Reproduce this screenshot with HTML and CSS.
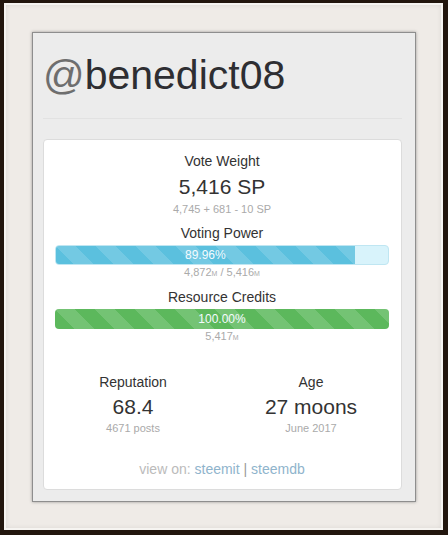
FILE: index.html
```html
<!DOCTYPE html>
<html lang="en">
<head>
  <meta charset="UTF-8" />
  <meta name="viewport" content="width=device-width, initial-scale=1.0" />
  <title>@benedict08</title>
  <link rel="stylesheet" href="styles.css">
</head>
<body>
  <div class="frame">
    <div class="panel">
      <h1><span class="at">@</span>benedict08</h1>
      <hr>
      <div class="card">
        <div class="label">Vote Weight</div>
        <div class="value">5,416 SP</div>
        <div class="sub">4,745 + 681 - 10 SP</div>

        <div class="label spaced">Voting Power</div>
        <div class="progress info">
          <div class="bar" style="width: 89.96%">89.96%</div>
        </div>
        <div class="sub">4,872<small>M</small> / 5,416<small>M</small></div>

        <div class="label spaced">Resource Credits</div>
        <div class="progress success">
          <div class="bar" style="width: 100%">100.00%</div>
        </div>
        <div class="sub">5,417<small>M</small></div>

        <div class="stats">
          <div class="stat">
            <div class="label">Reputation</div>
            <div class="value">68.4</div>
            <div class="sub">4671 posts</div>
          </div>
          <div class="stat">
            <div class="label">Age</div>
            <div class="value">27 moons</div>
            <div class="sub">June 2017</div>
          </div>
        </div>

        <div class="links">view on: <a href="#">steemit</a> <span class="sep">|</span> <a href="#">steemdb</a></div>
      </div>
    </div>
  </div>
</body>
</html>
```

FILE: styles.css
```css
html, body {
  margin: 0;
  height: 100%;
}
body {
  font-family: 'Liberation Sans', Arial, sans-serif;
  background-color: #22160e;
  color: #333;
  padding: 3px 5px 5px 4px;
  box-sizing: border-box;
}
.frame {
  height: 100%;
  box-sizing: border-box;
  background-color: #efebe7;
  padding: 29px 27px 28px 28px;
  box-shadow: inset 0 0 0 2px #f6f4f1, inset 0 0 6px rgba(0,0,0,0.15);
}
.panel {
  height: 100%;
  box-sizing: border-box;
  background-color: #ececec;
  border: 1px solid #8e8e8e;
  box-shadow: 0 0 3px rgba(0,0,0,0.35);
  padding: 19px 13px 12px 10px;
}
h1 {
  font-size: 41px;
  line-height: 46px;
  font-weight: normal;
  margin: 0;
  color: #2e2e32;
}
h1 .at {
  color: #6e6e6e;
}
hr {
  border: none;
  border-top: 1px solid #e2e2e2;
  margin: 20px 0;
}
.card {
  background: white;
  border: 1px solid #dcdcdc;
  border-radius: 4px;
  padding: 10px 12px 10px 11px;
  text-align: center;
}
.label {
  font-size: 14px;
  line-height: 22px;
  color: #333;
}
.label.spaced {
  margin-top: 6px;
}
.progress + .sub + .label.spaced {
  margin-top: 7px;
}
.value {
  font-size: 21px;
  line-height: 30px;
  color: #333;
}
.sub {
  font-size: 11px;
  line-height: 14px;
  color: #aaa;
}
.sub small {
  font-size: 7px;
  line-height: 0;
}
.progress {
  height: 20px;
  margin-top: 1px;
  border-radius: 4px;
  overflow: hidden;
  box-sizing: border-box;
}
.progress.info {
  background-color: #d8f3fb;
  border: 1px solid #bfe6f2;
}
.progress.success {
  background-color: #dff0d8;
}
.bar {
  height: 100%;
  font-size: 12px;
  line-height: 20px;
  color: #f4fbff;
  text-align: center;
  background-image: linear-gradient(45deg, rgba(255,255,255,0.15) 25%, transparent 25%, transparent 50%, rgba(255,255,255,0.15) 50%, rgba(255,255,255,0.15) 75%, transparent 75%, transparent);
  background-size: 40px 40px;
}
.progress.info .bar {
  background-color: #5bc0de;
  line-height: 18px;
}
.progress.success .bar {
  background-color: #5cb85c;
}
.stats {
  display: grid;
  grid-template-columns: 1fr 1fr;
  margin: 28px -11px 0 -11px;
}
.stat .value {
  line-height: 28px;
}
.links {
  margin-top: 24px;
  font-size: 14px;
  line-height: 20px;
  color: #bbb;
}
.links a {
  color: #8fb4cc;
  text-decoration: none;
}
.links .sep {
  color: #999;
}
```
